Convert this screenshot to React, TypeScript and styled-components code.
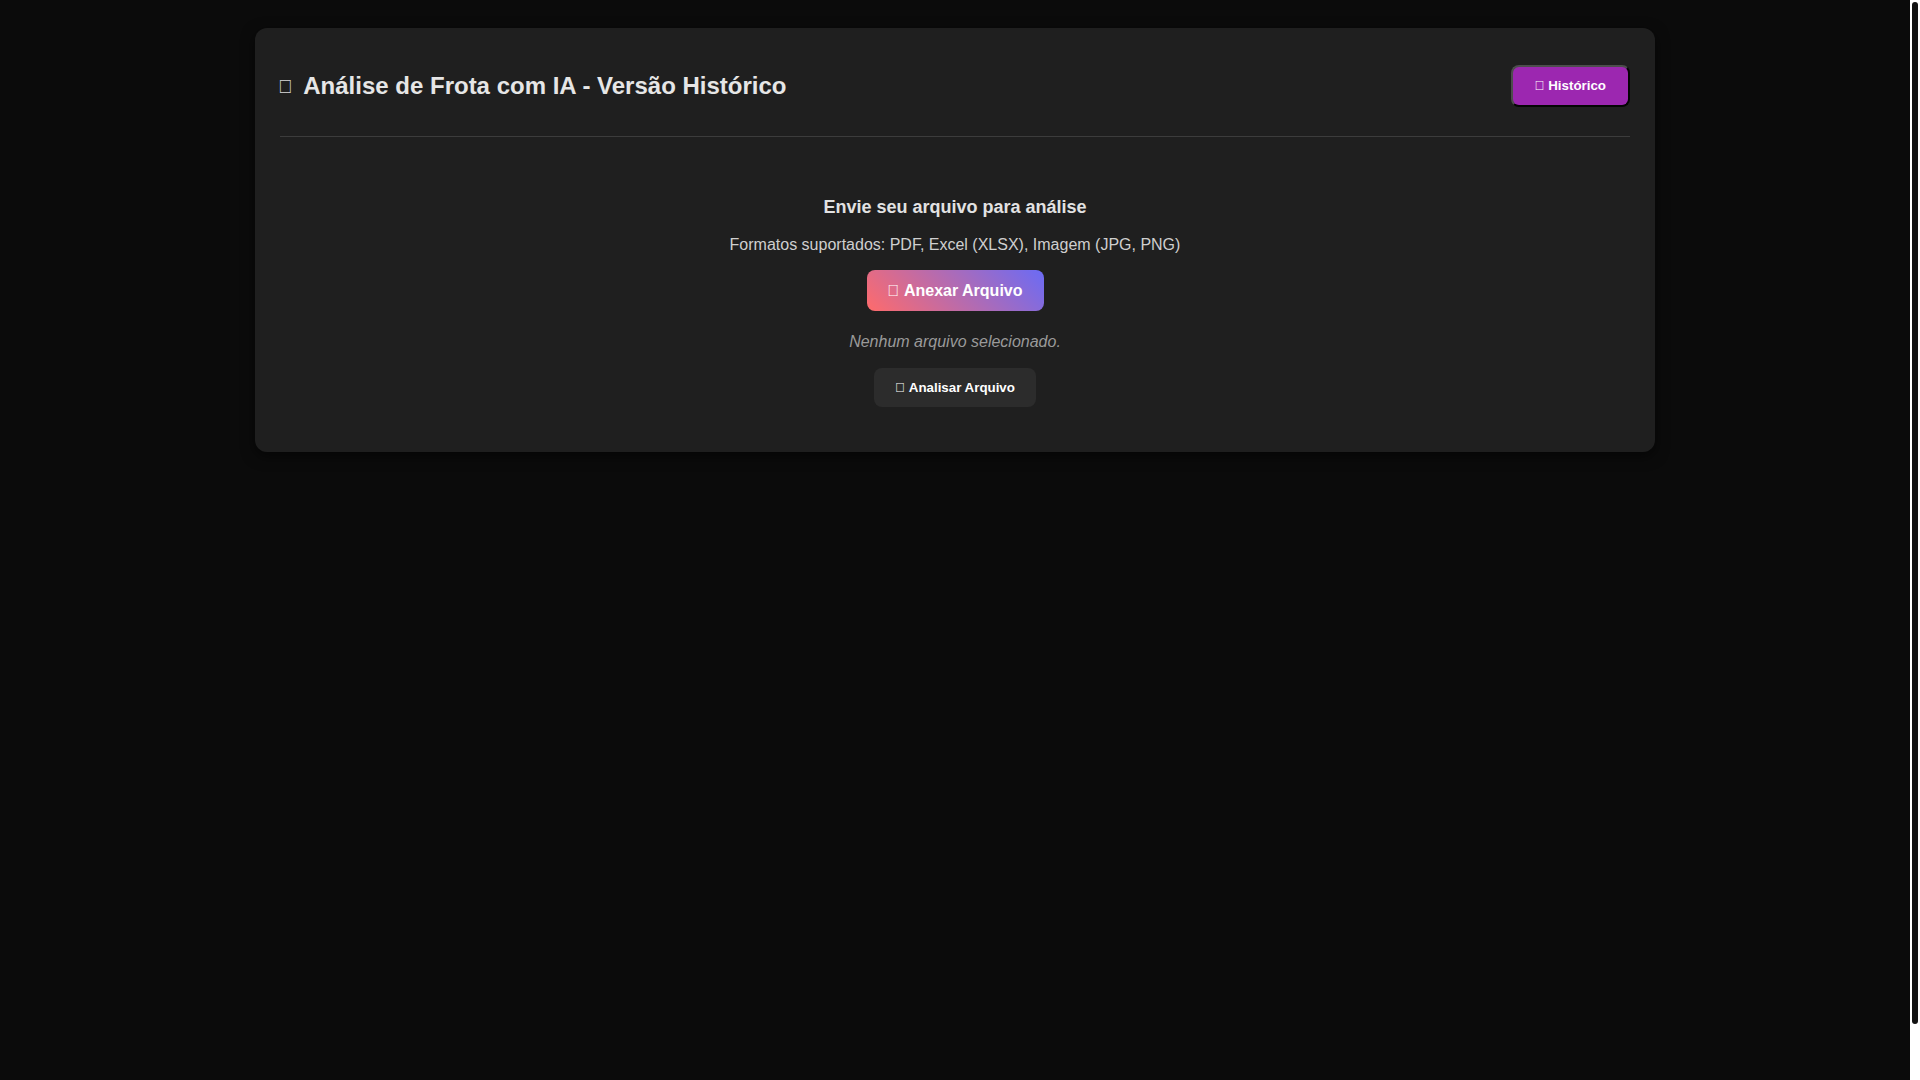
import React from "react";
import styled, { createGlobalStyle } from "styled-components";

const GlobalStyle = createGlobalStyle`
  html { background: #0b0b0b; overflow: hidden; }
  body {
    margin: 0;
    padding: 28px 10px 28px 0;
    box-sizing: border-box;
    min-height: 100vh;
    background: #0b0b0b;
    color: #e6e6e6;
    font-family: "Liberation Sans", Arial, sans-serif;
  }
`;

const ScrollTrack = styled.div`
  position: fixed;
  top: 0;
  right: 0;
  width: 10px;
  height: 100vh;
  background: #ffffff;
`;

const ScrollThumb = styled.div`
  position: absolute;
  top: 2px;
  left: 2px;
  width: 6px;
  height: 1022px;
  border-radius: 3px;
  background: #111111;
`;

const Card = styled.main`
  max-width: 1400px;
  margin: 0 auto;
  box-sizing: border-box;
  background: #1f1f1f;
  border-radius: 12px;
  padding: 37px 25px 45px;
  box-shadow: 0 4px 14px rgba(0, 0, 0, 0.55);
`;

const Header = styled.header`
  display: flex;
  align-items: center;
  justify-content: space-between;
  padding-bottom: 29px;
  border-bottom: 1px solid #3c3c3c;
`;

const TitleRow = styled.div`
  display: flex;
  align-items: center;
  gap: 11px;
  margin-left: -2px;
`;

const TitleIcon = styled.span`
  font-size: 19px;
  color: #d8d8d8;
  line-height: 1;
`;

const Title = styled.h1`
  margin: 0;
  font-size: 24px;
  font-weight: 700;
  color: #e6e6e6;
  line-height: 42px;
`;

const HistoryButton = styled.button`
  font-family: "Liberation Sans", Arial, sans-serif;
  font-size: 13.333px;
  font-weight: 700;
  color: #ffffff;
  background: #9c27b0;
  border: 2px solid;
  border-color: #4d4d4d #050505 #050505 #4d4d4d;
  border-radius: 8px;
  padding: 10px 22px;
  line-height: 18px;
  cursor: pointer;
`;

const UploadSection = styled.section`
  display: flex;
  flex-direction: column;
  align-items: center;
  padding-top: 60px;
  text-align: center;
`;

const Heading = styled.h3`
  margin: 0 0 18px;
  font-size: 18px;
  font-weight: 700;
  color: #e2e2e2;
  line-height: 21px;
`;

const Formats = styled.p`
  margin: 0 0 16px;
  font-size: 16px;
  color: #cfcfcf;
  line-height: 18px;
`;

const AttachButton = styled.button`
  font-family: "Liberation Sans", Arial, sans-serif;
  font-size: 16px;
  font-weight: 700;
  color: #ffffff;
  border: none;
  border-radius: 8px;
  background: linear-gradient(45deg, #ff6b6b, #6a6bf5);
  padding: 0 21px;
  height: 41px;
  cursor: pointer;
`;

const FileName = styled.p`
  margin: 22px 0 17px;
  font-size: 16px;
  font-style: italic;
  color: #9a9a9a;
  line-height: 18px;
`;

const AnalyzeButton = styled.button`
  font-family: "Liberation Sans", Arial, sans-serif;
  font-size: 13.333px;
  font-weight: 700;
  color: #ffffff;
  background: #2c2c2c;
  border: none;
  border-radius: 8px;
  padding: 0 21px;
  height: 39px;
  cursor: pointer;
`;

export default function App() {
  return (
    <>
      <GlobalStyle />
      <Card>
        <Header>
          <TitleRow>
            <TitleIcon>{"\uf0d1"}</TitleIcon>
            <Title>Análise de Frota com IA - Versão Histórico</Title>
          </TitleRow>
          <HistoryButton>{"\uf1da"} Histórico</HistoryButton>
        </Header>
        <UploadSection>
          <Heading>Envie seu arquivo para análise</Heading>
          <Formats>Formatos suportados: PDF, Excel (XLSX), Imagem (JPG, PNG)</Formats>
          <AttachButton>{"\uf0c6"} Anexar Arquivo</AttachButton>
          <FileName>Nenhum arquivo selecionado.</FileName>
          <AnalyzeButton>{"\uf1ec"} Analisar Arquivo</AnalyzeButton>
        </UploadSection>
      </Card>
      <ScrollTrack>
        <ScrollThumb />
      </ScrollTrack>
    </>
  );
}
